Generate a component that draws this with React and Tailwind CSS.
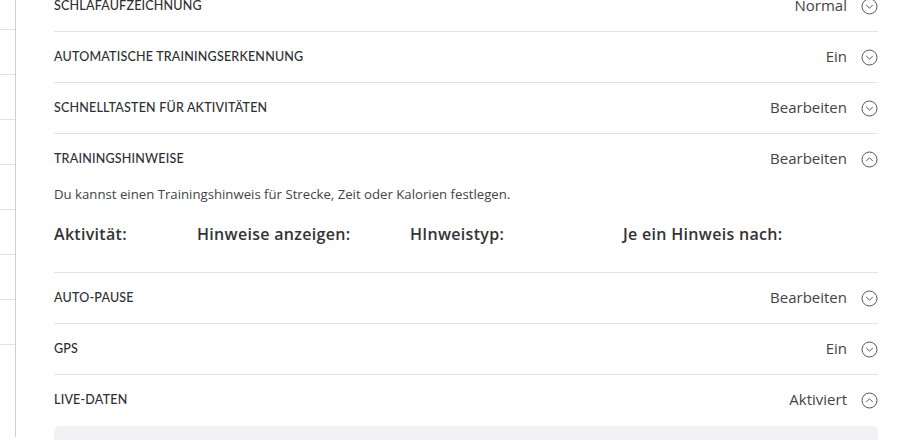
import React from 'react';

const rowsTop = [
  { label: 'SCHLAFAUFZEICHNUNG', value: 'Normal' },
  { label: 'AUTOMATISCHE TRAININGSERKENNUNG', value: 'Ein' },
  { label: 'SCHNELLTASTEN FÜR AKTIVITÄTEN', value: 'Bearbeiten' },
];

const rowsBottom = [
  { label: 'AUTO-PAUSE', value: 'Bearbeiten' },
  { label: 'GPS', value: 'Ein' },
];

const Chevron = ({ up }) => (
  <svg width="17" height="17" viewBox="0 0 17 17" fill="none" stroke="#555" strokeWidth="1">
    <circle cx="8.5" cy="8.5" r="7.5" />
    {up ? (
      <path d="M5.5 9.8 L8.5 6.8 L11.5 9.8" strokeLinecap="round" strokeLinejoin="round" />
    ) : (
      <path d="M5.5 7.2 L8.5 10.2 L11.5 7.2" strokeLinecap="round" strokeLinejoin="round" />
    )}
  </svg>
);

const Row = ({ label, value, up, border = true }) => (
  <div className={`flex items-center h-[51px] ${border ? 'border-b border-[#e2e1e8]' : ''}`}>
    <span className="font-['Lato'] text-[12.5px] font-medium tracking-[0.2px] text-[#2e2e33]">{label}</span>
    <span className="ml-auto text-[15px] text-[#444] -mt-[2px]">{value}</span>
    <span className="ml-[14px] flex"><Chevron up={up} /></span>
  </div>
);

const App = () => {
  return (
    <div className="flex h-[440px] overflow-hidden bg-white" style={{ fontFamily: '"Open Sans", Lato, sans-serif' }}>
      {/* left nav strip */}
      <div className="w-[16px] shrink-0 border-r border-[#d0d0d6] h-[437px] flex flex-col">
        {Array.from({ length: 8 }).map((_, i) => (
          <div key={i} className="h-[45px] shrink-0 border-b border-[#e2e1e8] first:h-[30px]" />
        ))}
      </div>

      <div className="flex-1 pl-[38px] pr-[32px] -mt-[19px]">
        {rowsTop.map((r) => (
          <Row key={r.label} {...r} />
        ))}

        {/* expanded */}
        <div className="border-b border-[#e2e1e8]">
          <Row label="TRAININGSHINWEISE" value="Bearbeiten" up border={false} />
          <p className="text-[13.2px] text-[#444] leading-[18px]">
            Du kannst einen Trainingshinweis für Strecke, Zeit oder Kalorien festlegen.
          </p>
          <div className="flex mt-[20px] pb-[27px] text-[16px] font-semibold tracking-[0.3px] text-[#333] leading-[22px]">
            <span className="w-[143px]">Aktivität:</span>
            <span className="w-[213px]">Hinweise anzeigen:</span>
            <span className="w-[213px]">HInweistyp:</span>
            <span>Je ein Hinweis nach:</span>
          </div>
        </div>

        {rowsBottom.map((r) => (
          <Row key={r.label} {...r} />
        ))}
        <Row label="LIVE-DATEN" value="Aktiviert" up border={false} />
        <div className="h-[60px] rounded-[6px] bg-[#f2f2f4]" />
      </div>
    </div>
  );
};

export default App;
